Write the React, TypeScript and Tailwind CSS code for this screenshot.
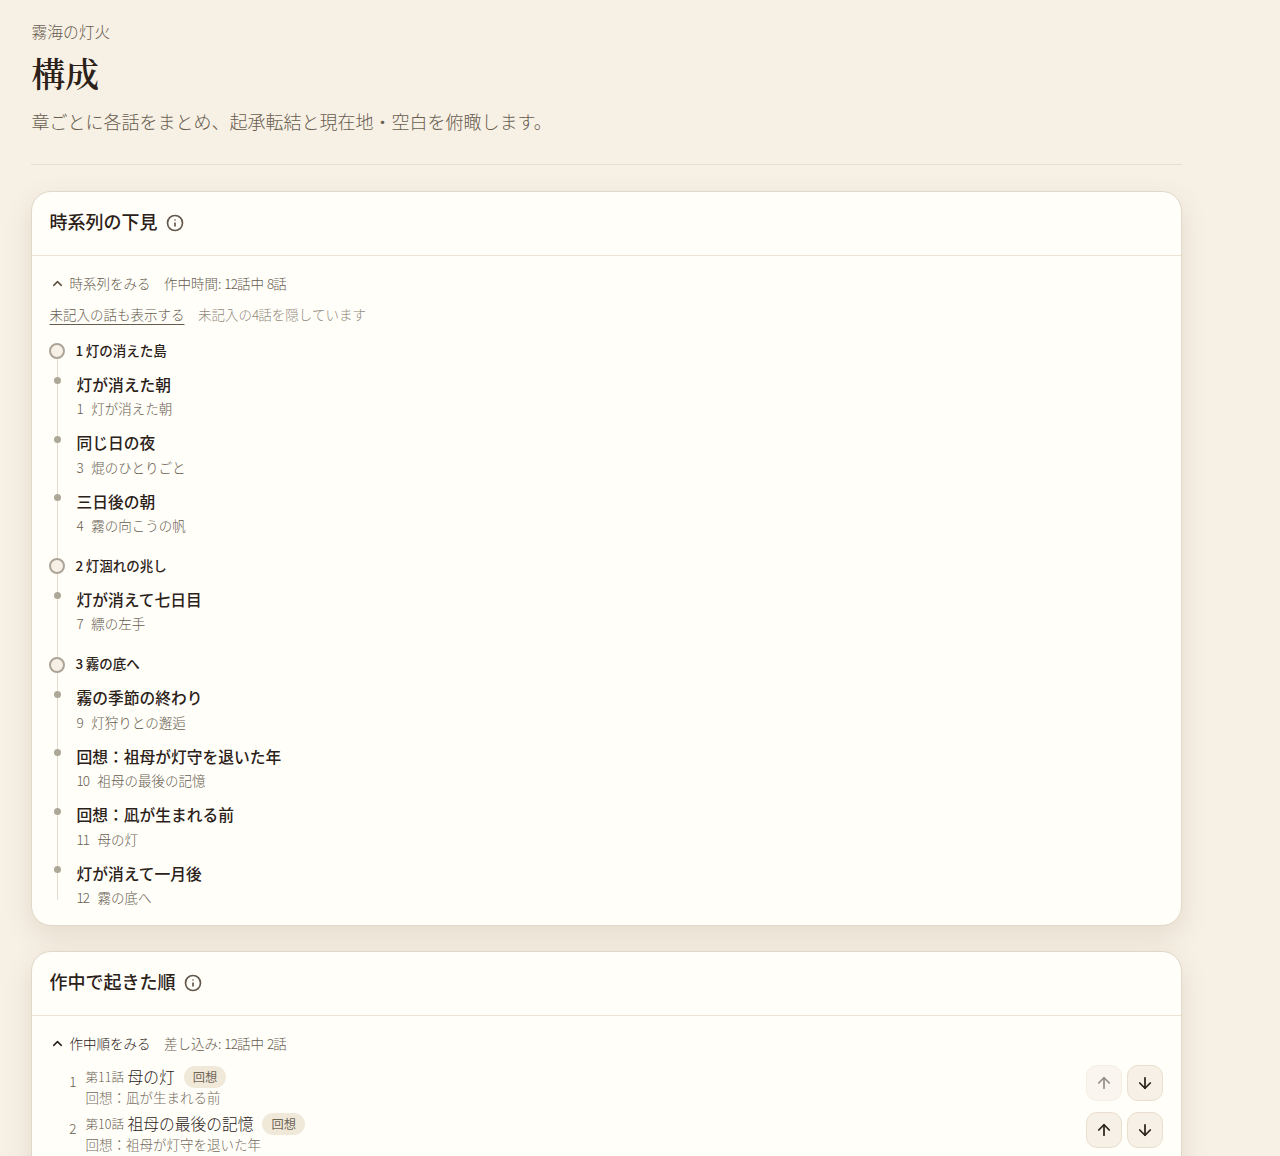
import { ArrowDown, ArrowUp, ChevronUp, Info } from 'lucide-react'
import type { ReactNode } from 'react'

const chapters = [
  {
    no: 1,
    title: '灯の消えた島',
    events: [
      { when: '灯が消えた朝', no: 1, episode: '灯が消えた朝' },
      { when: '同じ日の夜', no: 3, episode: '焜のひとりごと' },
      { when: '三日後の朝', no: 4, episode: '霧の向こうの帆' },
    ],
  },
  {
    no: 2,
    title: '灯涸れの兆し',
    events: [{ when: '灯が消えて七日目', no: 7, episode: '縹の左手' }],
  },
  {
    no: 3,
    title: '霧の底へ',
    events: [
      { when: '霧の季節の終わり', no: 9, episode: '灯狩りとの邂逅' },
      { when: '回想：祖母が灯守を退いた年', no: 10, episode: '祖母の最後の記憶' },
      { when: '回想：凪が生まれる前', no: 11, episode: '母の灯' },
      { when: '灯が消えて一月後', no: 12, episode: '霧の底へ' },
    ],
  },
]

const storyOrder = [
  { no: 11, title: '母の灯', when: '回想：凪が生まれる前' },
  { no: 10, title: '祖母の最後の記憶', when: '回想：祖母が灯守を退いた年' },
]

function Card({ title, children }: { title: string; children: ReactNode }) {
  return (
    <section className="rounded-[20px] border border-[#e0d8c8] bg-[#fffef9] shadow-[0_10px_28px_rgba(110,85,45,0.13)]">
      <header className="flex h-16 items-center gap-[8.5px] border-b border-[#eee2d2] px-[17.5px] pb-[4px]">
        <h2 className="text-[18px] leading-[27px] font-medium text-[#2b2118]">{title}</h2>
        <Info className="mt-[2px] size-[18px] text-[#62574a]" strokeWidth={2.2} />
      </header>
      {children}
    </section>
  )
}

// Digits are set tighter than the surrounding kana
function Num({ children }: { children: ReactNode }) {
  return <span className="tracking-[-0.07em]">{children}</span>
}

function MoveButton({ up, disabled }: { up?: boolean; disabled?: boolean }) {
  const Icon = up ? ArrowUp : ArrowDown
  return (
    <button
      disabled={disabled}
      aria-label={up ? '上へ' : '下へ'}
      className="flex size-9 items-center justify-center rounded-[11px] border border-[#eadfce] bg-[#f7f0e6] text-[#2b2118] disabled:opacity-50"
    >
      <Icon className="size-[18px]" strokeWidth={2.3} />
    </button>
  )
}

function Timeline() {
  return (
    <div className="relative mt-[14px]">
      <div className="absolute top-5 bottom-[11px] left-[7.5px] w-px bg-[#e4dccd]" />
      <ol className="relative flex flex-col gap-[15.8px]">
        {chapters.map((chapter) => (
          <li key={chapter.no}>
            <div className="flex h-6 items-center gap-[11px]">
              <span className="-ml-px size-4 rounded-full border-[2.5px] border-[#ada497] bg-[#f7f0e6]" />
              <h3 className="-mt-[2px] text-[13.5px] font-medium text-[#2b2118]">
                {chapter.no}
                <span className="ml-[2.5px]">{chapter.title}</span>
              </h3>
            </div>
            <ul>
              {chapter.events.map((event) => (
                <li key={event.no} className="flex h-[58.5px] gap-4">
                  <span className="mt-[14px] ml-1 size-[7px] rounded-full bg-[#ada797]" />
                  <div className="pt-[9.5px]">
                    <p className="text-[15.75px] leading-6 font-medium text-[#2b2118]">{event.when}</p>
                    <p className="mt-[1.5px] flex gap-[8.5px] text-[13.5px] leading-5 text-[#675d4f]">
                      <Num>{event.no}</Num>
                      <span>{event.episode}</span>
                    </p>
                  </div>
                </li>
              ))}
            </ul>
          </li>
        ))}
      </ol>
    </div>
  )
}

export default function App() {
  return (
    <div className="h-[1156px] overflow-hidden bg-[#f7f0e5] font-['Noto_Sans_CJK_JP',sans-serif] font-light">
      <main className="ml-[31px] w-[1151px] pt-5">
        <header className="border-b border-[#eadfce] pb-[29px]">
          <p className="pl-[0.5px] text-[15.75px] leading-6 text-[#675d4f]">霧海の灯火</p>
          <h1 className="mt-[7px] pl-[0.5px] font-['Noto_Serif_CJK_JP','Noto_Sans_CJK_JP',serif] text-[33.75px] leading-[44px] font-semibold text-[#2b2118]">
            構成
          </h1>
          <p className="mt-[13px] pl-[0.5px] text-[18px] leading-[27px] text-[#675d4f]">
            章ごとに各話をまとめ、起承転結と現在地・空白を俯瞰します。
          </p>
        </header>

        <div className="mt-[26px] flex flex-col gap-[25px]">
          <Card title="時系列の下見">
            <div className="h-[669px] px-[17.5px] pt-[17px]">
              <div className="flex h-[22px] items-center pb-[1px] text-[13.5px] text-[#675d4f]">
                <ChevronUp className="mr-[5px] size-[15px] text-[#5d5142]" strokeWidth={2.4} />
                <span>時系列をみる</span>
                <span className="ml-[13.5px]">
                  作中時間: <Num>12</Num>話中 <Num>8</Num>話
                </span>
              </div>
              <div className="mt-[9px] flex h-[21px] items-center gap-[13.5px] text-[13.5px]">
                <a href="#" className="text-[#675d4f] underline underline-offset-4">
                  未記入の話も表示する
                </a>
                <span className="text-[#938a7c]">
                  未記入の<Num>4</Num>話を隠しています
                </span>
              </div>
              <Timeline />
            </div>
          </Card>

          <Card title="作中で起きた順">
            <div className="pt-[17px] pr-[18px] pb-6 pl-[17.5px]">
              <div className="flex h-[22px] items-center pb-[1px] text-[13.5px] text-[#675d4f]">
                <ChevronUp className="mr-[5px] size-[15px] text-[#2b2118]" strokeWidth={2.4} />
                <span className="text-[#2b2118]">作中順をみる</span>
                <span className="ml-[13.5px]">
                  差し込み: <Num>12</Num>話中 <Num>2</Num>話
                </span>
              </div>
              <ol className="mt-[10px]">
                {storyOrder.map((item, i) => (
                  <li key={item.no} className="flex h-[47px] items-start">
                    <span className="mt-[6px] w-[27px] text-right text-[13.5px] leading-5 text-[#675d4f]">
                      {i + 1}
                    </span>
                    <div className="ml-[9px] flex-1">
                      <div className="flex h-[23px] items-center">
                        <span className="mt-[2px] text-[12.5px] text-[#675d4f]">
                          第{item.no}話
                        </span>
                        <span className="ml-[3.5px] text-[15.75px] text-[#2b2118]">{item.title}</span>
                        <span className="ml-[9px] rounded-full bg-[#f0e9da] px-[9px] text-[12.25px] leading-[22px] font-normal text-[#6f6557]">
                          回想
                        </span>
                      </div>
                      <p className="-mt-[0.5px] text-[13.5px] leading-[19px] text-[#756b5d]">{item.when}</p>
                    </div>
                    <div className="flex gap-[5px]">
                      <MoveButton up disabled={i === 0} />
                      <MoveButton />
                    </div>
                  </li>
                ))}
              </ol>
            </div>
          </Card>
        </div>
      </main>
    </div>
  )
}
